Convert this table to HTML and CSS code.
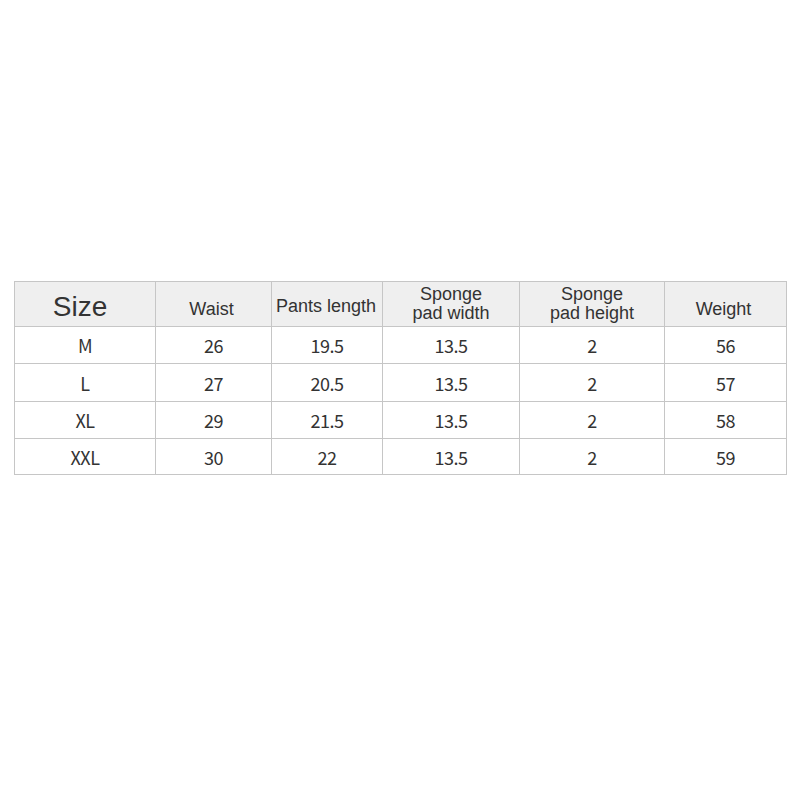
FILE: index.html
```html
<!DOCTYPE html>
<html>
<head>
<meta charset="utf-8">
<link rel="stylesheet" href="styles.css">
</head>
<body>
<div class="page">
<table class="sizes">
<colgroup>
<col class="c1"><col class="c2"><col class="c3"><col class="c4"><col class="c5"><col class="c6">
</colgroup>
<thead>
<tr class="head">
<th class="big">Size</th>
<th class="one">Waist</th>
<th class="len">Pants length</th>
<th class="two">Sponge<br>pad width</th>
<th class="two">Sponge<br>pad height</th>
<th class="one">Weight</th>
</tr>
</thead>
<tbody>
<tr class="r1"><td>M</td><td>26</td><td>19.5</td><td>13.5</td><td>2</td><td>56</td></tr>
<tr class="r2"><td>L</td><td>27</td><td>20.5</td><td>13.5</td><td>2</td><td>57</td></tr>
<tr class="r3"><td>XL</td><td>29</td><td>21.5</td><td>13.5</td><td>2</td><td>58</td></tr>
<tr class="r4"><td>XXL</td><td>30</td><td>22</td><td>13.5</td><td>2</td><td>59</td></tr>
</tbody>
</table>
</div>
</body>
</html>
```
FILE: styles.css
```css
html, body {
  margin: 0;
  padding: 0;
  background: #ffffff;
}
.page {
  padding: 281px 0 0 14px;
}
.sizes {
  border-collapse: collapse;
  table-layout: fixed;
  width: 772px;
  color: #333333;
}
.c1 { width: 141px; }
.c2 { width: 116px; }
.c3 { width: 111px; }
.c4 { width: 137px; }
.c5 { width: 145px; }
.c6 { width: 122px; }
.sizes th, .sizes td {
  border: 1px solid #c6c6c6;
  text-align: center;
  padding: 0;
}
.sizes th {
  background: #efefef;
  font-family: "Liberation Sans", Arial, sans-serif;
  font-weight: normal;
  font-size: 18px;
  line-height: 19px;
  vertical-align: middle;
}
.head { height: 45px; }
.sizes th.big {
  font-size: 28px;
  line-height: 30px;
  padding-top: 6px;
  padding-right: 10px;
}
.sizes th.one {
  padding-top: 10px;
  padding-right: 4px;
}
.sizes th.len {
  padding-top: 4px;
  padding-right: 2px;
}
.sizes th.two {
  padding-top: 0;
}
.sizes td {
  font-family: "Noto Sans CJK SC", "Noto Sans", sans-serif;
  font-size: 18px;
  line-height: 20px;
  letter-spacing: -0.5px;
}
.r1 { height: 37px; }
.r2 { height: 38px; }
.r3 { height: 37px; }
.r4 { height: 36px; }
```
